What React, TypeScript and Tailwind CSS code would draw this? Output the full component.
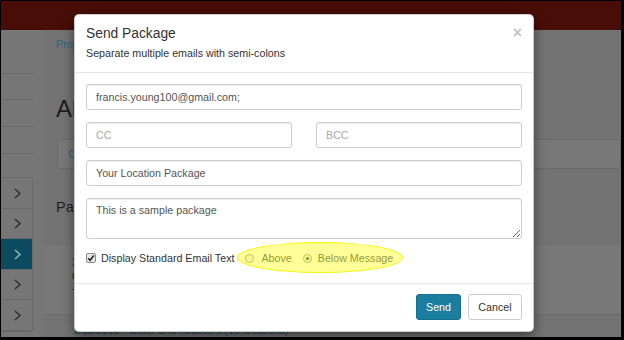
import React from "react";

function Chevron({ color }: { color: string }) {
  return (
    <svg width="7" height="11" viewBox="0 0 7 11" fill="none">
      <polyline points="1,1 6,5.5 1,10" stroke={color} strokeWidth="1.4" />
    </svg>
  );
}

const inputCls =
  "h-[26px] w-full border border-[#ccc] rounded-[3px] px-[9px] text-[10.7px] text-[#555] placeholder:text-[#a9a9a9] shadow-[inset_0_1px_1px_rgba(0,0,0,0.075)] outline-none";

export default function App() {
  const items = [
    { h: "h-[31px]", active: false },
    { h: "h-[30px]", active: false },
    { h: "h-[31px]", active: true },
    { h: "h-[30px]", active: false },
    { h: "h-[31px]", active: false },
  ];
  return (
    <div className="relative w-[624px] h-[340px] overflow-hidden border-t border-l border-r-[3px] border-b-[3px] border-black bg-[#737373] font-['Liberation_Sans',Arial,sans-serif] flex flex-col">
      <div className="h-[29px] shrink-0 bg-[#480d07]" />
      <div className="flex flex-1 min-h-0">
        {/* sidebar */}
        <div className="w-[43px] shrink-0 bg-[#767676]">
          <div className="w-[32px]">
            <div className="h-[44px] border-b border-[#696969]" />
            <div className="h-[26px] border-b border-[#696969]" />
            <div className="h-[27px] border-b border-[#696969]" />
            <div className="h-[27px] border-b border-[#696969]" />
          </div>
          <div className="mt-[23px] w-[32px] border border-l-0 border-[#696969] rounded-r-[3px] overflow-hidden">
            {items.map((it, i) => (
              <div
                key={i}
                className={`${it.h} border-b border-[#696969] flex items-center pl-[13px] ${it.active ? "bg-[#0c4b5f]" : ""}`}
              >
                <Chevron color={it.active ? "#9db4bd" : "#2c2c2c"} />
              </div>
            ))}
          </div>
        </div>
        {/* main */}
        <div className="flex-1 min-w-0 pl-[12px] flex flex-col">
          <div className="h-[68px] pt-[8px] text-[10.7px] leading-[12px] text-[#2a6480]">Projects</div>
          <div className="h-[28px] text-[24px] leading-[28px] text-[#1c1c1c]">All Packages</div>
          <div className="mt-[16px] ml-[1px] h-[31px] border border-[#696969] rounded-[3px] bg-[#787878] flex items-center pl-[10px] text-[10.7px] text-[#2a6480]">
            Content
          </div>
          <div className="mt-[30px] h-[17px] text-[14.5px] leading-[17px] text-[#1f1f1f]">Packages</div>
          <div className="mt-[30px] -ml-[12px] h-[72px] border-b border-[#696969] bg-[#787878] pl-[28px] pt-[10px] text-[10.7px] leading-[13px]">
            <div className="text-[#1d4f63] font-bold">2/15</div>
            <div className="text-[#2a2a2a]">new</div>
            <div className="text-[#2a2a2a]">-</div>
          </div>
          <div className="mt-[9px] pl-[17px] text-[10.7px] leading-[13px] text-[#1d4f63] whitespace-nowrap">
            1/11/2018 - water and houses ii (10 locations)
          </div>
        </div>
      </div>

      {/* modal */}
      <div className="absolute left-[73px] top-[13px] w-[460px] h-[318px] bg-white border border-black/20 rounded-[5px] shadow-[0_4px_12px_rgba(0,0,0,0.5)] flex flex-col">
        <div className="relative h-[58px] shrink-0 border-b border-[#e5e5e5] px-[11px] pt-[11px]">
          <div className="text-[13.8px] leading-[16px] text-[#333]">Send Package</div>
          <div className="mt-[4px] text-[10.7px] leading-[15px] text-[#333]">Separate multiple emails with semi-colons</div>
          <span className="absolute right-[11px] top-[10px] text-[16px] leading-[16px] font-bold text-[#c4c4c4]">×</span>
        </div>
        <div className="h-[210px] shrink-0 px-[11px] pt-[11px] flex flex-col gap-[12px]">
          <input readOnly value="francis.young100@gmail.com;" className={inputCls} />
          <div className="grid grid-cols-2 gap-[24px]">
            <input readOnly placeholder="CC" className={inputCls} />
            <input readOnly placeholder="BCC" className={inputCls} />
          </div>
          <input readOnly value="Your Location Package" className={inputCls} />
          <textarea
            readOnly
            value="This is a sample package"
            className="h-[41px] w-full border border-[#ccc] rounded-[3px] px-[9px] pt-[4px] text-[10.7px] leading-[15px] text-[#555] shadow-[inset_0_1px_1px_rgba(0,0,0,0.075)] outline-none"
          />
          <div className="mt-[-1px] h-[16px] flex items-center text-[10.7px] leading-[13px] text-[#333]">
            <span className="w-[10px] h-[10px] border border-[#8a8a8a] rounded-[2px] bg-[#e6e6e6] flex items-center justify-center">
              <svg width="8" height="8" viewBox="0 0 8 8">
                <polyline points="1.2,4.2 3.1,6.2 6.8,1.6" fill="none" stroke="#222" strokeWidth="1.6" />
              </svg>
            </span>
            <span className="ml-[5px] whitespace-nowrap">Display Standard Email Text</span>
            <div className="relative ml-[11px] flex items-center h-[16px]">
              <span className="w-[9px] h-[9px] rounded-full border border-[#9a9a9a] bg-[#f2f2f2]" />
              <span className="ml-[7px] text-[#555]">Above</span>
              <span className="ml-[11px] w-[9px] h-[9px] rounded-full border border-[#9a9a9a] bg-[#f2f2f2] flex items-center justify-center">
                <span className="w-[3px] h-[3px] rounded-full bg-[#444]" />
              </span>
              <span className="ml-[6px] text-[#555] whitespace-nowrap">Below Message</span>
              <span className="absolute left-[-8px] top-[-8px] w-[166px] h-[31px] rounded-[50%] border-[1.5px] border-[#f5f500] bg-[#ffff00]/40" />
            </div>
          </div>
        </div>
        <div className="flex-1 border-t border-[#e5e5e5] flex justify-end items-start gap-[7px] px-[11px] pt-[10px]">
          <button className="w-[45px] h-[26px] bg-[#1b7ea0] border border-[#176f8e] rounded-[3px] text-white text-[10.7px]">
            Send
          </button>
          <button className="w-[54px] h-[26px] bg-white border border-[#ccc] rounded-[3px] text-[#333] text-[10.7px]">
            Cancel
          </button>
        </div>
      </div>
    </div>
  );
}
